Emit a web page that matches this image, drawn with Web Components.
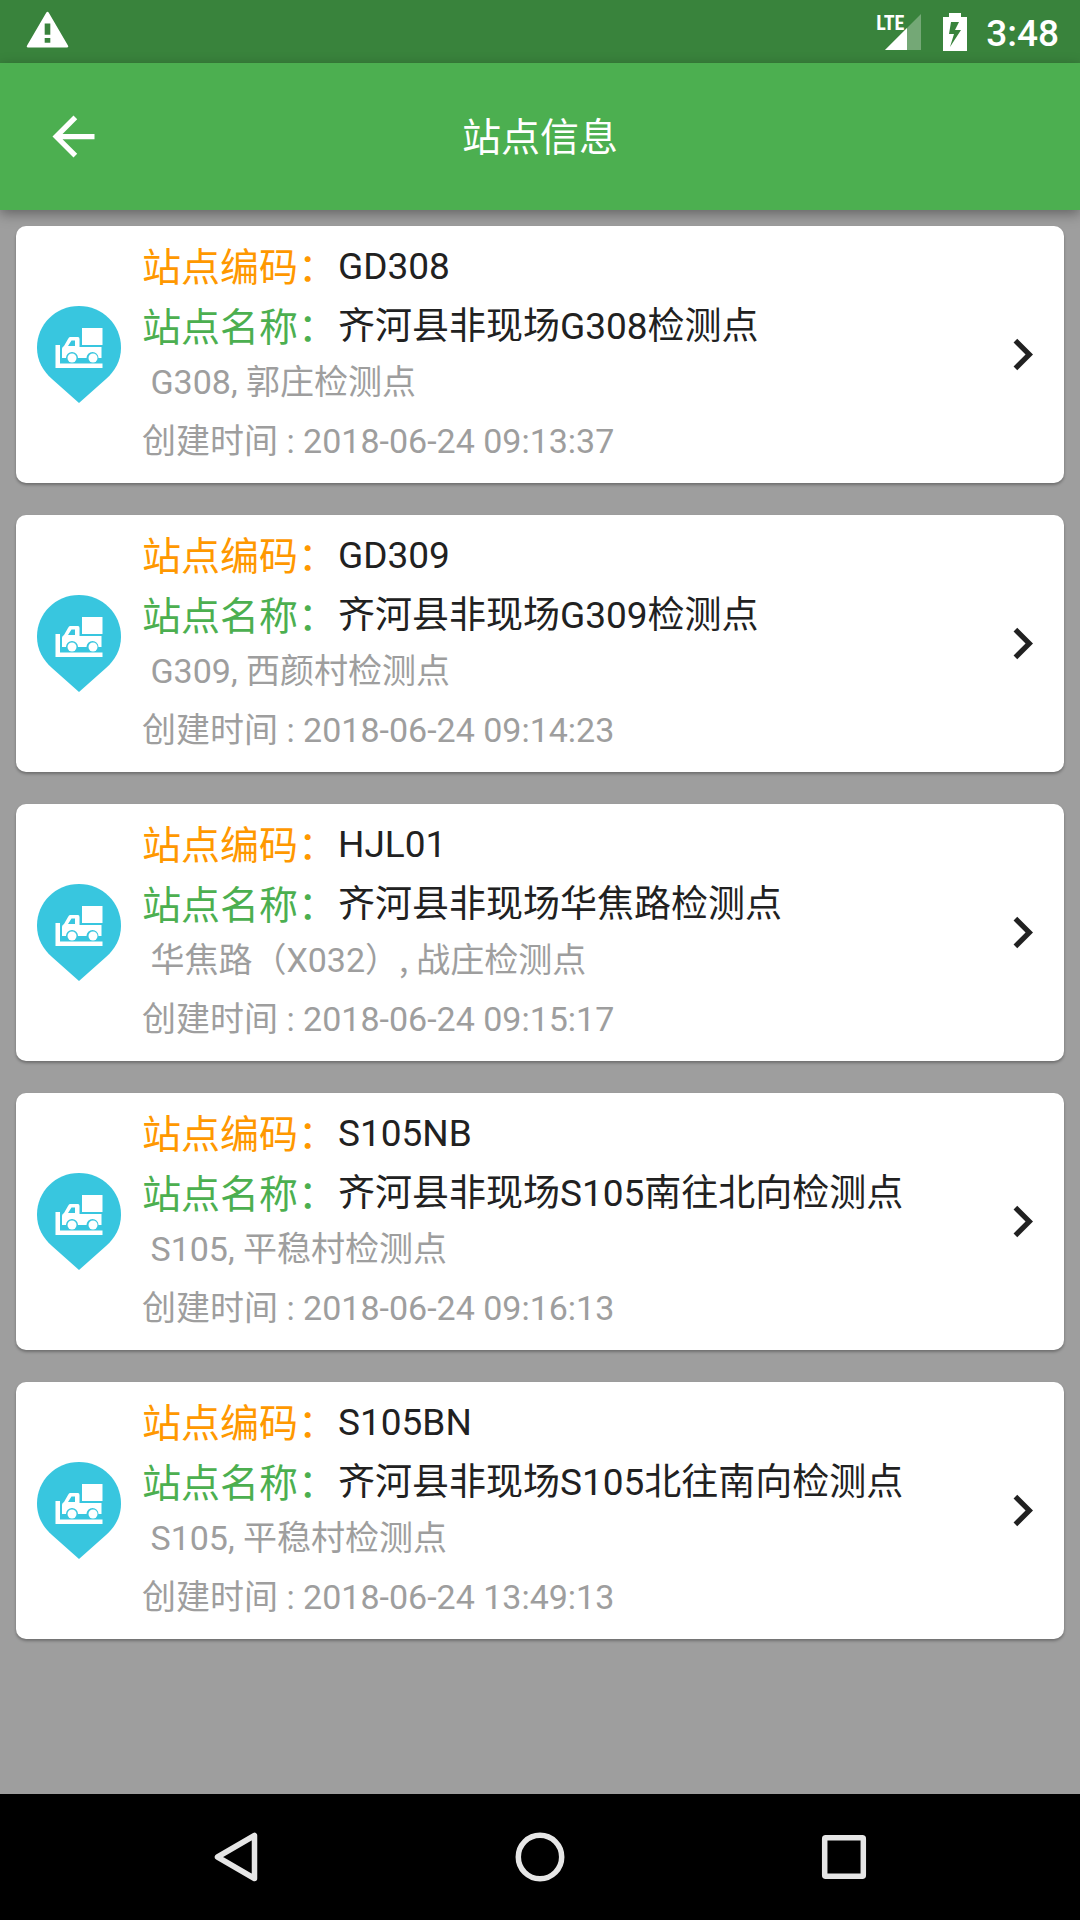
<!DOCTYPE html>
<html lang="zh-CN">
<head>
<meta charset="utf-8">
<meta name="viewport" content="width=device-width, initial-scale=1">
<title>站点信息</title>
<style>
  body { margin: 0; background: #9e9e9e; font-family: Roboto, "Noto Sans CJK SC", sans-serif; }
</style>
</head>
<body>
<station-app></station-app>

<template id="t-app">
  <style>
    :host { display: flex; flex-direction: column; min-height: 100vh; }
    main { flex: 1; display: flex; flex-direction: column; gap: 32px; padding: 16px; }
    .cjk { font-family: "Noto Sans CJK SC", sans-serif; line-height: 1; }
  </style>
  <status-bar>3:48</status-bar>
  <app-bar>站点信息</app-bar>
  <main></main>
  <nav-bar></nav-bar>
</template>

<template id="t-status">
  <style>
    :host { display: flex; align-items: center; height: 63px; padding: 0 21px 0 25px; background: #39833c; color: #fff; }
    svg { display: block; fill: currentColor; }
    .warn { margin-bottom: 2px; }
    .signal { display: flex; margin-left: auto; position: relative; }
    .signal span { position: absolute; left: -9px; top: -1px; font: bold 20px/20px "Roboto Condensed", "Liberation Sans Narrow", Roboto, sans-serif; }
    .battery { margin: 0 19px 0 22px; }
    time { font-size: 37px; font-weight: 500; line-height: 44px; padding-top: 4px; }
  </style>
  <svg class="warn" width="45" height="45" viewBox="0 0 24 24"><path d="M1.6 21h20.8q1 0 .5-1L12.700 2.500q-.7-1-1.400 0L1.100 20q-.5 1 .5 1zM13.500 18.500h-3V16h3zm0-4.200h-3v-6h3z" fill-rule="evenodd"/></svg>
  <div class="signal">
    <svg width="36" height="36" viewBox="0 0 36 36"><path d="M0 36L36 0v36z" opacity=".3"/><path d="M0 36L22 14v22z"/></svg>
    <span>LTE</span>
  </div>
  <svg class="battery" width="24" height="38" viewBox="0 0 24 38"><path fill-rule="evenodd" d="M6 0h12v4h6v34H0V4h6zM8 9L6 21h5L7 34 18 17h-6l4-8z"/></svg>
  <time><slot></slot></time>
</template>

<template id="t-appbar">
  <style>
    :host { display: grid; grid-template-columns: 147px 1fr 147px; align-items: center; height: 147px; background: #4caf50; color: #fff; box-shadow: 0 4px 12px rgba(0,0,0,.36); }
    button { justify-self: center; display: flex; padding: 0; border: 0; background: none; color: inherit; }
    h1 { margin: 0; padding-top: 2px; text-align: center; font-size: 39px; font-weight: 400; line-height: 58px; }
  </style>
  <button type="button" aria-label="返回"><svg width="63" height="63" viewBox="0 0 24 24" fill="currentColor"><path d="M20 11H7.830l5.590-5.590L12 4l-8 8 8 8 1.410-1.410L7.830 13H20z"/></svg></button>
  <h1><slot></slot></h1>
</template>

<template id="t-card">
  <style>
    :host { display: block; }
    a { display: flex; align-items: center; padding: 0 10px 0 21px; border-radius: 10px; background: #fff; color: #212121; text-decoration: none; box-shadow: 0 2px 3px rgba(0,0,0,.3); }
    svg { display: block; flex: none; }
    .pin { margin-right: 21px; }
    .text { flex: 1; display: flex; flex-direction: column; padding: 11px 0 17px; }
    .row { display: flex; align-items: center; gap: 1px; height: 60px; font-size: 37px; line-height: 54px; }
    .label { padding-top: 2px; font-size: 39px; line-height: 58px; }
    .code { color: #ff9800; }
    .name { color: #4caf50; }
    .sub { display: flex; flex-direction: column; gap: 9px; color: #9e9e9e; font-size: 34px; line-height: 50px; white-space: pre; }
  </style>
  <a href="#">
    <svg class="pin" width="84" height="98" viewBox="0 0 84 98">
      <path fill="#38c6df" d="M42 0C18.500 0 0 18.500 0 41.500 0 55 6 65 15 73L42 97 69 73C78 65 84 55 84 41.500 84 18.500 65.500 0 42 0z"/>
      <path fill="#fff" d="M45 22h20.500v17H45z"/>
      <path fill="#fff" d="M18.500 39h4.500v18.500h42.500v4.500h-47z"/>
      <path fill="#fff" fill-rule="evenodd" d="M33 31h8q1.500 0 1.500 2v8h22v11h-3a6 6 0 0 0-12 0H41a6 6 0 0 0-12 0h-4v-9q0-2 2-3l4-7q1-2 2-2zM34.500 34.500l-3.500 5.500h7v-5.500z"/>
      <circle cx="35" cy="52" r="4.500" fill="#fff"/><circle cx="56" cy="52" r="4.500" fill="#fff"/>
    </svg>
    <div class="text">
      <div class="row"><span class="label code">站点编码：</span><slot name="code"></slot></div>
      <div class="row"><span class="label name">站点名称：</span><slot name="name"></slot></div>
      <div class="sub"><div> <slot name="place"></slot></div><div>创建时间 : <slot name="time"></slot></div></div>
    </div>
    <svg width="63" height="63" viewBox="0 0 24 24" fill="currentColor"><path d="M8.590 16.590L13.170 12 8.590 7.410 10 6l6 6-6 6z"/></svg>
  </a>
</template>

<template id="t-nav">
  <style>
    :host { display: flex; height: 126px; padding: 0 84px; background: #000; }
    button { flex: 1; display: flex; align-items: center; justify-content: center; padding: 0; border: 0; background: none; }
    svg { fill: none; stroke: #e6e6e6; stroke-width: 5.500; stroke-linejoin: round; }
  </style>
  <button type="button" aria-label="返回"><svg width="50" height="50" viewBox="0 0 50 50"><path d="M43.500 3.500v43L6.500 25z"/></svg></button>
  <button type="button" aria-label="主屏幕"><svg width="50" height="50" viewBox="0 0 50 50"><circle cx="25" cy="25" r="21.700"/></svg></button>
  <button type="button" aria-label="最近任务"><svg width="50" height="50" viewBox="0 0 50 50"><rect x="5.700" y="5.700" width="38.600" height="38.600" rx="1"/></svg></button>
</template>

<script>
  class TemplateElement extends HTMLElement {
    constructor() {
      super();
      this.attachShadow({ mode: "open" })
        .append(document.getElementById(this.constructor.template).content.cloneNode(true));
    }
  }
  customElements.define("status-bar", class extends TemplateElement { static template = "t-status"; });
  customElements.define("app-bar", class extends TemplateElement { static template = "t-appbar"; });
  customElements.define("nav-bar", class extends TemplateElement { static template = "t-nav"; });
  customElements.define("station-card", class extends TemplateElement { static template = "t-card"; });

  const stations = [
    { code: "GD308", name: "齐河县非现场G308检测点", place: "G308, 郭庄检测点", time: "2018-06-24 09:13:37" },
    { code: "GD309", name: "齐河县非现场G309检测点", place: "G309, 西颜村检测点", time: "2018-06-24 09:14:23" },
    { code: "HJL01", name: "齐河县非现场华焦路检测点", place: "华焦路（X032）, 战庄检测点", time: "2018-06-24 09:15:17" },
    { code: "S105NB", name: "齐河县非现场S105南往北向检测点", place: "S105, 平稳村检测点", time: "2018-06-24 09:16:13" },
    { code: "S105BN", name: "齐河县非现场S105北往南向检测点", place: "S105, 平稳村检测点", time: "2018-06-24 13:49:13" }
  ];

  // A comma that follows a full-width bracket is set in the CJK face.
  function textSpan(text, className) {
    const span = document.createElement("span");
    span.className = className;
    span.append(text);
    return span;
  }

  customElements.define("station-app", class extends TemplateElement {
    static template = "t-app";
    connectedCallback() {
      this.shadowRoot.querySelector("main").replaceChildren(...stations.map(station => {
        const card = document.createElement("station-card");
        for (const [slot, text] of Object.entries(station)) {
          const span = document.createElement("span");
          span.slot = slot;
          span.append(...text.split(/(?<=）)(, )/).map(part => part === ", " ? textSpan(part, "cjk") : part));
          card.append(span);
        }
        return card;
      }));
    }
  });
</script>
</body>
</html>
